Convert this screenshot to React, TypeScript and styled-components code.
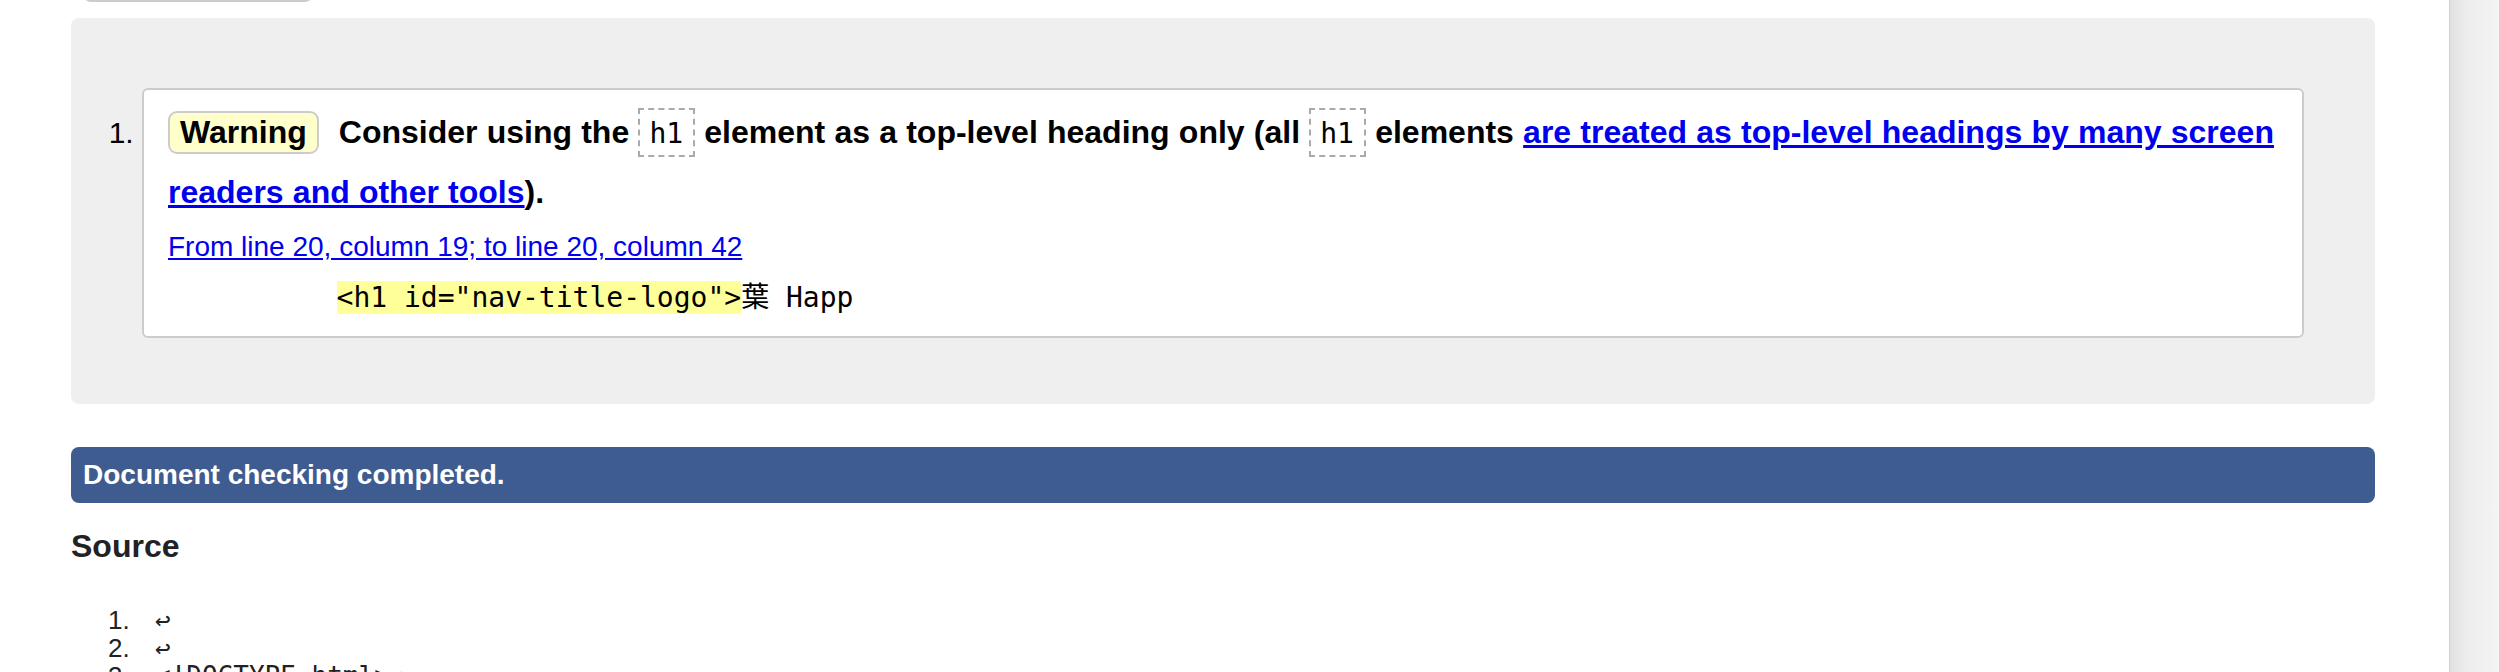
import styled, { createGlobalStyle } from 'styled-components';

const GlobalStyle = createGlobalStyle`
  html, body {
    margin: 0;
    padding: 0;
    background: #fff;
  }

  body {
    font-family: 'Liberation Sans', Arial, Helvetica, sans-serif;
    color: #000;
  }
`;

const Page = styled.div`
  display: flex;
  height: 672px;
  overflow: hidden;
`;

const Main = styled.main`
  flex: 1;
  min-width: 0;
  padding: 0 74px 0 71px;
`;

const Scrollbar = styled.div`
  flex: none;
  width: 49px;
  border-left: 1px solid #d2d2d2;
  background: linear-gradient(to right, #e0e0e0, #ededed 35%, #f4f4f4);
`;

// bottom edge of the button that scrolled out of view
const ButtonStub = styled.div`
  box-sizing: border-box;
  width: 230px;
  height: 40px;
  margin: -38px 0 0 12px;
  border: 2px solid #ccc;
  border-radius: 8px;
  background: #f4f4f4;
`;

const ResultsPanel = styled.section`
  margin-top: 16px;
  padding: 70px 71px 66px;
  background: #efefef;
  border-radius: 8px;
`;

const MessageList = styled.ol`
  margin: 0;
  padding: 0;
  list-style: decimal outside;
`;

const MessageCard = styled.li`
  font-size: 30px;
  background: #fff;
  border: 2px solid #ccc;
  border-radius: 6px;
  padding: 13px 24px 22px;
`;

const MessageText = styled.p`
  margin: 0;
  font-size: 32px;
  font-weight: bold;
  line-height: 59px;
  word-spacing: 0.3px;
`;

const Badge = styled.strong`
  display: inline-block;
  margin-right: 20px;
  padding: 1px 10px;
  line-height: normal;
  background: #ffffcc;
  border: 2px solid #ccc;
  border-radius: 9px;
`;

const Code = styled.code`
  font-family: 'DejaVu Sans Mono', monospace;
  font-size: 28px;
  font-weight: normal;
  padding: 7px 10px 5px 9px;
  border: 2px dashed #aaa;
`;

const DocLink = styled.a`
  color: #0000ee;
  text-decoration: underline;
`;

const Location = styled.p`
  margin: 9px 0 0;
  font-size: 28px;
  line-height: normal;
`;

const Extract = styled.pre`
  margin: 18px 0 0;
  font-family: 'DejaVu Sans Mono', 'Noto Sans CJK JP', monospace;
  font-size: 28px;
  line-height: 33px;
`;

const Highlight = styled.mark`
  background: #ffff99;
  color: inherit;
`;

const StatusBar = styled.p`
  box-sizing: border-box;
  display: flex;
  align-items: center;
  height: 56px;
  margin: 43px 0 0;
  padding: 0 12px;
  background: #3e5c8f;
  color: #fff;
  font-size: 28px;
  font-weight: bold;
  border-radius: 8px;
`;

const SourceHeading = styled.h2`
  margin: 25px 0 0;
  font-size: 32px;
  font-weight: bold;
  line-height: normal;
  color: #222;
`;

const SourceList = styled.ol`
  margin: 41px 0 0;
  padding: 0 0 0 37px;
  list-style: none;
  counter-reset: line;
  font-size: 26px;
  line-height: 28px;
  color: #222;
`;

const SourceLine = styled.li`
  counter-increment: line;

  &::before {
    content: counter(line) '.';
    display: inline-block;
    width: 47px;
  }
`;

const SourceCode = styled.code`
  font-family: 'DejaVu Sans Mono', monospace;
  white-space: pre;
`;

const sourceLines = [
  '',
  '',
  '<!DOCTYPE html>',
  '<html lang="en">',
  '<head>',
];

export default function App() {
  return (
    <>
      <GlobalStyle />
      <Page>
        <Main>
          <ButtonStub />
          <ResultsPanel>
            <MessageList>
              <MessageCard>
                <MessageText>
                  <Badge>Warning</Badge>
                  Consider using the <Code>h1</Code> element as a top-level heading only (all{' '}
                  <Code>h1</Code> elements{' '}
                  <DocLink href="#">
                    are treated as top-level headings by many screen readers and other tools
                  </DocLink>
                  ).
                </MessageText>
                <Location>
                  <DocLink href="#">From line 20, column 19; to line 20, column 42</DocLink>
                </Location>
                <Extract>
                  {'          '}
                  <Highlight>{'<h1 id="nav-title-logo">'}</Highlight>
                  {'葉 Happ'}
                </Extract>
              </MessageCard>
            </MessageList>
          </ResultsPanel>
          <StatusBar>Document checking completed.</StatusBar>
          <SourceHeading>Source</SourceHeading>
          <SourceList>
            {sourceLines.map((line, i) => (
              <SourceLine key={i}>
                <SourceCode>{line + '↩'}</SourceCode>
              </SourceLine>
            ))}
          </SourceList>
        </Main>
        <Scrollbar />
      </Page>
    </>
  );
}
